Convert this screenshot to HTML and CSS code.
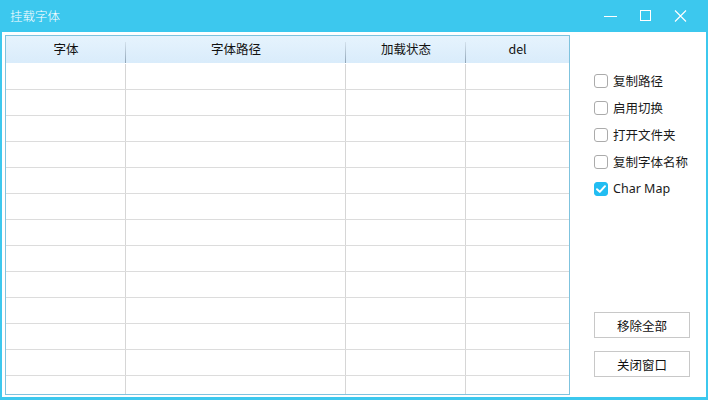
FILE: index.html
```html
<!DOCTYPE html>
<html lang="zh-CN">
<head>
<meta charset="utf-8">
<title>挂载字体</title>
<link rel="stylesheet" href="styles.css">
</head>
<body>
<div class="window">
  <div class="titlebar">
    <div class="title">挂载字体</div>
    <div class="controls">
      <span class="ctl"><svg width="14" height="12" viewBox="0 0 14 12"><path d="M0 6.5H13" stroke="#fff" stroke-width="1" fill="none"/></svg></span>
      <span class="ctl"><svg width="14" height="12" viewBox="0 0 14 12"><rect x="1.5" y="0.5" width="10" height="10" stroke="#fff" stroke-width="1" fill="none"/></svg></span>
      <span class="ctl"><svg width="14" height="12" viewBox="0 0 14 12"><path d="M1 0.5L12 11.5M12 0.5L1 11.5" stroke="#fff" stroke-width="1.1" fill="none"/></svg></span>
    </div>
  </div>
  <div class="client">
    <div class="grid">
      <div class="head">
        <div class="hc c1"><span>字体</span><i class="sep"></i></div>
        <div class="hc c2"><span>字体路径</span><i class="sep"></i></div>
        <div class="hc c3"><span>加载状态</span><i class="sep"></i></div>
        <div class="hc c4"><span>del</span></div>
      </div>
      <div class="body">
        <div class="row"><div class="c c1"></div><div class="c c2"></div><div class="c c3"></div><div class="c c4"></div></div>
        <div class="row"><div class="c c1"></div><div class="c c2"></div><div class="c c3"></div><div class="c c4"></div></div>
        <div class="row"><div class="c c1"></div><div class="c c2"></div><div class="c c3"></div><div class="c c4"></div></div>
        <div class="row"><div class="c c1"></div><div class="c c2"></div><div class="c c3"></div><div class="c c4"></div></div>
        <div class="row"><div class="c c1"></div><div class="c c2"></div><div class="c c3"></div><div class="c c4"></div></div>
        <div class="row"><div class="c c1"></div><div class="c c2"></div><div class="c c3"></div><div class="c c4"></div></div>
        <div class="row"><div class="c c1"></div><div class="c c2"></div><div class="c c3"></div><div class="c c4"></div></div>
        <div class="row"><div class="c c1"></div><div class="c c2"></div><div class="c c3"></div><div class="c c4"></div></div>
        <div class="row"><div class="c c1"></div><div class="c c2"></div><div class="c c3"></div><div class="c c4"></div></div>
        <div class="row"><div class="c c1"></div><div class="c c2"></div><div class="c c3"></div><div class="c c4"></div></div>
        <div class="row"><div class="c c1"></div><div class="c c2"></div><div class="c c3"></div><div class="c c4"></div></div>
        <div class="row"><div class="c c1"></div><div class="c c2"></div><div class="c c3"></div><div class="c c4"></div></div>
        <div class="row"><div class="c c1"></div><div class="c c2"></div><div class="c c3"></div><div class="c c4"></div></div>
      </div>
    </div>
    <div class="side">
      <div class="checks">
        <label class="chk"><span class="box"></span><span class="lbl">复制路径</span></label>
        <label class="chk"><span class="box"></span><span class="lbl">启用切换</span></label>
        <label class="chk"><span class="box"></span><span class="lbl">打开文件夹</span></label>
        <label class="chk"><span class="box"></span><span class="lbl">复制字体名称</span></label>
        <label class="chk"><span class="box on"><svg width="14" height="14" viewBox="0 0 14 14"><path d="M3 7.2L5.8 9.9L11 4.2" stroke="#fff" stroke-width="2" fill="none" stroke-linecap="round" stroke-linejoin="round"/></svg></span><span class="lbl">Char Map</span></label>
      </div>
      <div class="buttons">
        <div class="btn">移除全部</div>
        <div class="btn">关闭窗口</div>
      </div>
    </div>
  </div>
</div>
</body>
</html>
```

FILE: styles.css
```css
html, body {
  margin: 0;
  padding: 0;
}
body {
  width: 708px;
  height: 400px;
  overflow: hidden;
  font-family: "Noto Sans", "Noto Sans CJK SC", sans-serif;
  font-size: 12.5px;
  color: #1a1a1a;
}
.window {
  width: 708px;
  height: 400px;
  background: #3cc8ee;
  display: flex;
  flex-direction: column;
  box-sizing: border-box;
}
.titlebar {
  height: 32px;
  display: flex;
  align-items: center;
  justify-content: space-between;
  flex: none;
}
.title {
  color: #fff;
  font-size: 12.5px;
  padding-left: 10px;
  line-height: 32px;
  font-family: "Noto Sans CJK SC", sans-serif;
  font-weight: 300;
}
.controls {
  display: flex;
  align-items: center;
  padding-right: 20px;
  gap: 21px;
  height: 32px;
}
.ctl {
  display: flex;
  width: 14px;
  height: 12px;
}
.client {
  flex: 1;
  margin: 0 2px 3px 2px;
  background: #fff;
  display: flex;
  padding: 3px 0 2px 3px;
  min-height: 0;
}
.grid {
  width: 565px;
  height: 360px;
  box-sizing: border-box;
  border: 1px solid #7fc3de;
  overflow: hidden;
  flex: none;
  display: flex;
  flex-direction: column;
}
.head {
  display: flex;
  height: 27px;
  background: linear-gradient(#e6f3fd, #d9ecfb);
  flex: none;
}
.hc {
  display: flex;
  align-items: center;
  justify-content: center;
  position: relative;
  font-family: "Noto Sans CJK SC", sans-serif;
  font-size: 12.5px;
  color: #111;
  padding-bottom: 2px;
  box-sizing: border-box;
}
.hc span {
  flex: 1;
  text-align: center;
}
.sep {
  position: absolute;
  right: 0;
  top: 6px;
  width: 1px;
  height: 21px;
  background: linear-gradient(#d3e1ec, #8fa4b6);
}
.c1 { width: 120px; }
.c2 { width: 220px; }
.c3 { width: 120px; }
.c4 { flex: 1; }
.body {
  flex: 1;
  display: flex;
  flex-direction: column;
  padding-top: 1px;
}
.row {
  display: flex;
  height: 26px;
  flex: none;
  box-sizing: border-box;
  border-bottom: 1px solid #dcdcdc;
}
.c {
  height: 100%;
  box-sizing: border-box;
}
.c.c1, .c.c2, .c.c3 {
  border-right: 1px solid #d6d6d6;
}
.side {
  flex: 1;
  display: flex;
  flex-direction: column;
  padding: 32px 0 18px 24px;
}
.checks {
  display: flex;
  flex-direction: column;
}
.chk {
  display: flex;
  align-items: center;
  height: 27px;
  font-family: "Noto Sans", "Noto Sans CJK SC", sans-serif;
  font-size: 12.5px;
  color: #1a1a1a;
}
.box {
  width: 14px;
  height: 14px;
  box-sizing: border-box;
  border: 1px solid #ababab;
  border-radius: 3px;
  margin-left: 0;
  margin-right: 5px;
  background: #fff;
  display: flex;
}
.box.on {
  background: #22bdf2;
  border-color: #22bdf2;
}
.box.on svg {
  margin: -1px;
}
.buttons {
  margin-top: auto;
  display: flex;
  flex-direction: column;
  gap: 13px;
}
.btn {
  width: 96px;
  height: 26px;
  box-sizing: border-box;
  border: 1px solid #c8c8c8;
  background: #fff;
  display: flex;
  align-items: center;
  justify-content: center;
  font-family: "Noto Sans CJK SC", sans-serif;
  font-size: 12.5px;
  color: #111;
}
```
